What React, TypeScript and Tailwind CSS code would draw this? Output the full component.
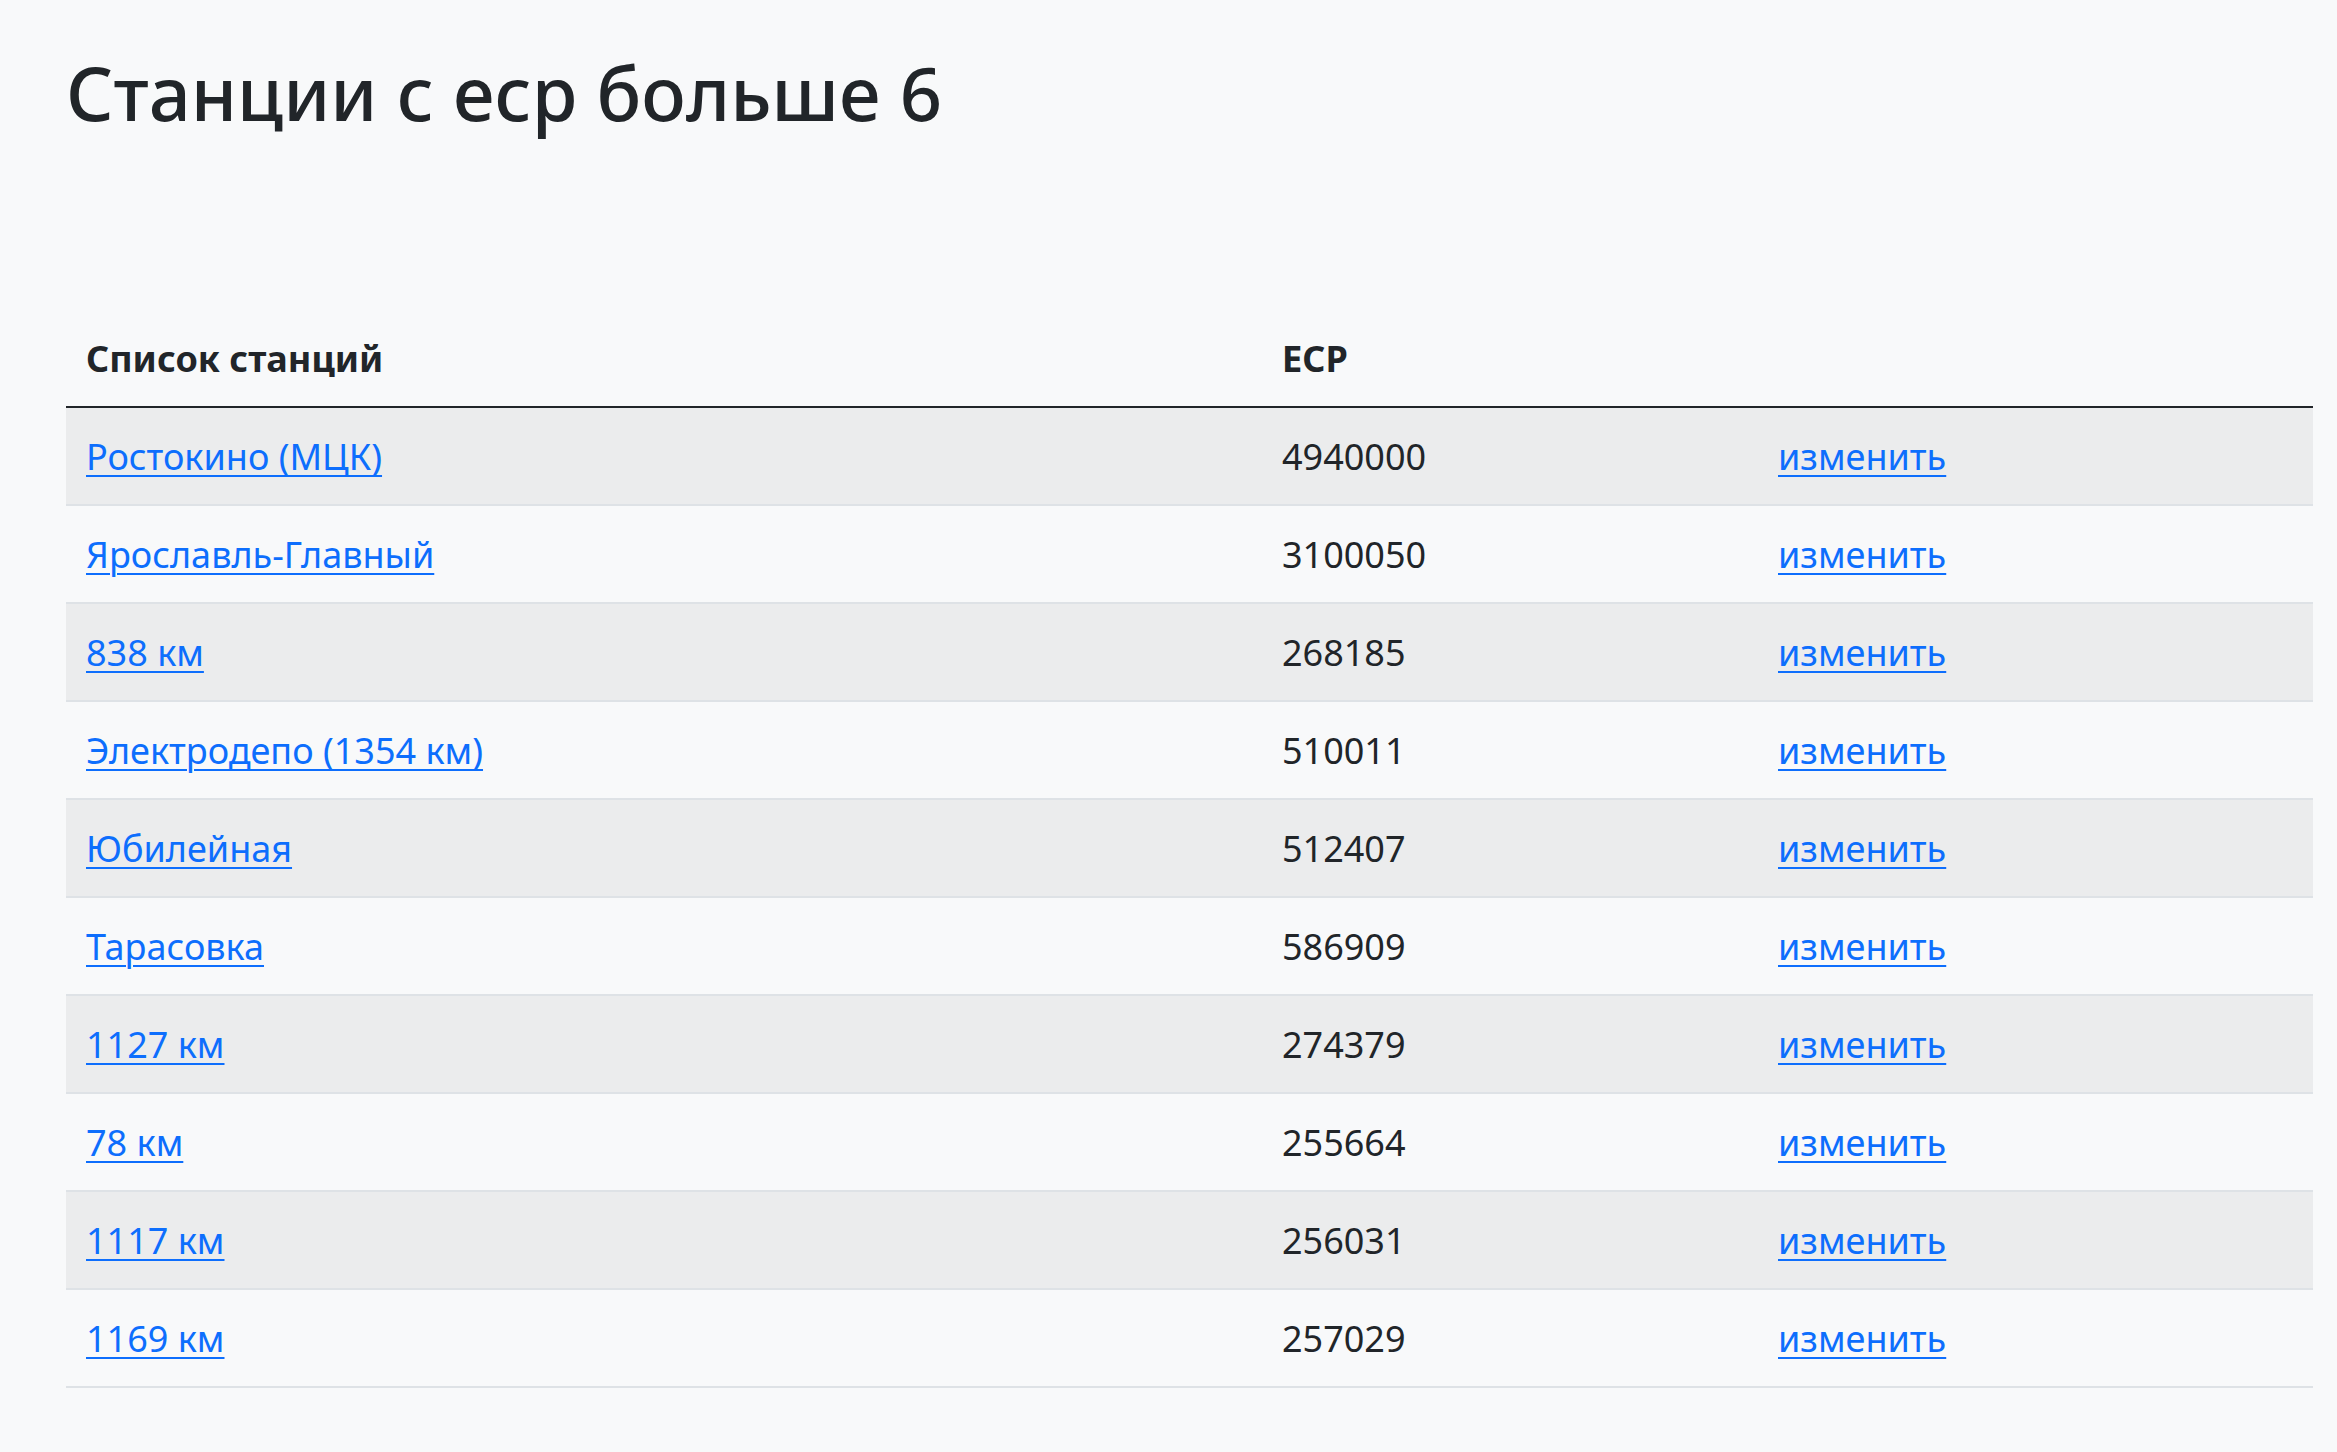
import React from "react";

const rows: [string, string][] = [
  ["Ростокино (МЦК)", "4940000"],
  ["Ярославль-Главный", "3100050"],
  ["838 км", "268185"],
  ["Электродепо (1354 км)", "510011"],
  ["Юбилейная", "512407"],
  ["Тарасовка", "586909"],
  ["1127 км", "274379"],
  ["78 км", "255664"],
  ["1117 км", "256031"],
  ["1169 км", "257029"],
];

export default function App() {
  return (
    <div
      className="min-h-[1452px] bg-[#f8f9fa] text-[#212529] pl-[66px] pr-[24px] pt-[49px]"
      style={{ fontFamily: '"Noto Sans", "Open Sans", sans-serif' }}
    >
      <h1 className="text-[74px] font-medium leading-[1.2] m-0">Станции с еср больше 6</h1>
      <table className="w-[2247px] mt-[171px] border-collapse text-[36px]">
        <thead>
          <tr className="h-[98px] border-b-2 border-[#212529]">
            <th className="w-[1196px] text-left font-bold pl-[20px] pt-[4px] align-middle">Список станций</th>
            <th className="w-[496px] text-left font-bold pl-[20px] pt-[4px] align-middle">ЕСР</th>
            <th className="text-left pl-[20px]"></th>
          </tr>
        </thead>
        <tbody>
          {rows.map(([name, code], i) => (
            <tr
              key={i}
              className={
                "h-[98px] border-b-2 border-[#dee2e6] " +
                (i % 2 === 0 ? "bg-[#ebeced]" : "bg-[#f8f9fa]")
              }
            >
              <td className="pl-[20px] pt-[3px] align-middle">
                <a href="#" className="text-[#0d6efd] underline decoration-[2px] underline-offset-[5px]">
                  {name}
                </a>
              </td>
              <td className="pl-[20px] pt-[3px] align-middle">{code}</td>
              <td className="pl-[20px] pt-[3px] align-middle">
                <a href="#" className="text-[#0d6efd] underline decoration-[2px] underline-offset-[5px]">
                  изменить
                </a>
              </td>
            </tr>
          ))}
        </tbody>
      </table>
    </div>
  );
}
